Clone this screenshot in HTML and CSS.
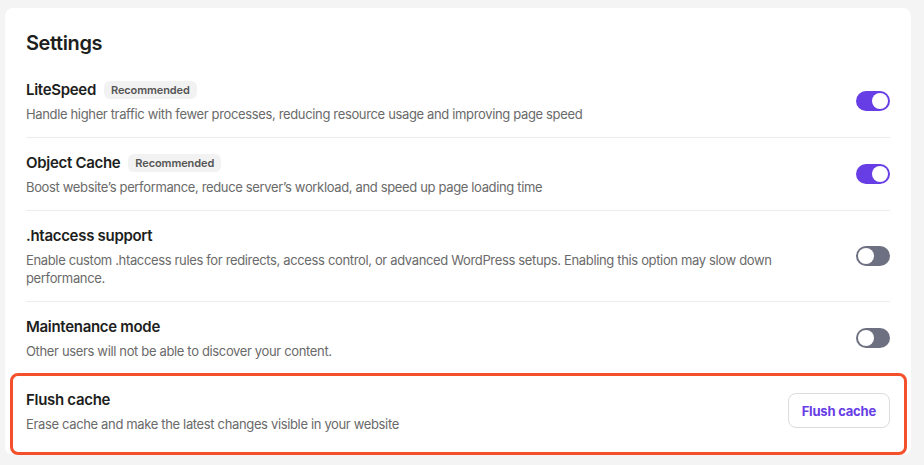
FILE: index.html
```html
<!DOCTYPE html>
<html lang="en">
<head>
    <meta charset="UTF-8">
    <meta name="viewport" content="width=device-width, initial-scale=1.0">
    <title>Settings</title>
    <link rel="stylesheet" href="styles.css">
</head>
<body>
    <div class="card">
        <h2 class="card-title">Settings</h2>

        <div class="setting-row">
            <div class="setting-text">
                <div class="setting-name">LiteSpeed <span class="badge">Recommended</span></div>
                <p class="setting-desc">Handle higher traffic with fewer processes, reducing resource usage and improving page speed</p>
            </div>
            <span class="toggle on"></span>
        </div>

        <div class="setting-row">
            <div class="setting-text">
                <div class="setting-name">Object Cache <span class="badge">Recommended</span></div>
                <p class="setting-desc">Boost website’s performance, reduce server’s workload, and speed up page loading time</p>
            </div>
            <span class="toggle on"></span>
        </div>

        <div class="setting-row">
            <div class="setting-text">
                <div class="setting-name">.htaccess support</div>
                <p class="setting-desc">Enable custom .htaccess rules for redirects, access control, or advanced WordPress setups. Enabling this option may slow down performance.</p>
            </div>
            <span class="toggle"></span>
        </div>

        <div class="setting-row">
            <div class="setting-text">
                <div class="setting-name">Maintenance mode</div>
                <p class="setting-desc">Other users will not be able to discover your content.</p>
            </div>
            <span class="toggle"></span>
        </div>

        <div class="setting-row highlighted">
            <div class="setting-text">
                <div class="setting-name">Flush cache</div>
                <p class="setting-desc">Erase cache and make the latest changes visible in your website</p>
            </div>
            <button class="btn-outline">Flush cache</button>
        </div>
    </div>
</body>
</html>
```

FILE: styles.css
```css
body {
    margin: 0;
    padding: 8px 13px 10px 5px;
    background-color: #f4f4f4;
    font-family: Inter, "Noto Sans", sans-serif;
    color: #1d1e20;
}
.card {
    background-color: #fff;
    border-radius: 8px;
    padding: 21px 21px 8px;
}
.card-title {
    margin: 0 0 8px;
    font-size: 20px;
    line-height: 28px;
    font-weight: 600;
    letter-spacing: -0.4px;
}
.setting-row {
    position: relative;
    display: flex;
    align-items: center;
    gap: 24px;
    padding: 13px 0 14px;
    border-bottom: 1px solid #ececec;
}
.setting-row:last-child {
    border-bottom: none;
}
.setting-text {
    flex: 1;
}
.setting-name {
    display: flex;
    align-items: center;
    gap: 8px;
    font-size: 15px;
    line-height: 24px;
    font-weight: 600;
    letter-spacing: -0.3px;
}
.badge {
    background-color: #f2f2f2;
    color: #555;
    font-size: 11px;
    font-weight: 600;
    line-height: 18px;
    letter-spacing: -0.1px;
    padding: 0 7px;
    border-radius: 6px;
}
.setting-desc {
    margin: 3px 0 0;
    font-size: 13px;
    line-height: 18px;
    letter-spacing: -0.35px;
    color: #6a6a6a;
}
.toggle {
    position: relative;
    flex: none;
    width: 34px;
    height: 20px;
    border-radius: 10px;
    background-color: #6d7081;
}
.toggle::after {
    content: "";
    position: absolute;
    top: 2px;
    left: 2px;
    width: 16px;
    height: 16px;
    border-radius: 50%;
    background-color: #fff;
}
.toggle.on {
    background-color: #673de6;
}
.toggle.on::after {
    left: 16px;
}
.btn-outline {
    flex: none;
    height: 35px;
    padding: 0 13px;
    border: 1px solid #dadce0;
    border-radius: 8px;
    background-color: #fff;
    color: #673de6;
    font-family: inherit;
    font-size: 13px;
    font-weight: 700;
    letter-spacing: -0.2px;
}
/* red outline drawn round the flush cache row */
.highlighted::before {
    content: "";
    position: absolute;
    top: -2px;
    left: -16px;
    right: -17px;
    bottom: -8px;
    border: 3px solid #f4502b;
    border-radius: 8px;
    pointer-events: none;
}
```
